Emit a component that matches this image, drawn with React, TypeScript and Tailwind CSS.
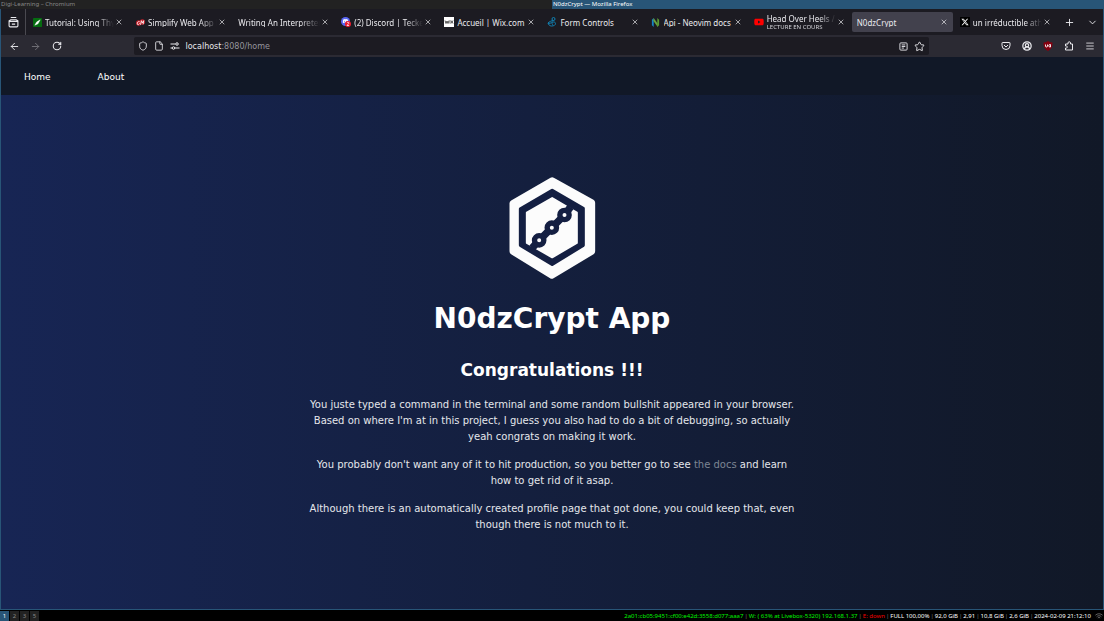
import type { ReactNode } from "react";
import {
  ArrowLeft,
  ArrowRight,
  ChevronDown,
  CircleUserRound,
  File,
  Menu,
  Plus,
  RotateCw,
  Shield,
  Star,
  X,
} from "lucide-react";
import { FaDiscord, FaXTwitter, FaYoutube } from "react-icons/fa6";

type Tab = {
  title: string;
  icon?: ReactNode;
  note?: string;
  active?: boolean;
};

const LeafIcon = () => (
  <svg viewBox="0 0 20 20" className="size-[9px]">
    <rect width="20" height="20" rx="1" fill="#056b10" />
    <path d="M16 4 8 9l-4 7 7-3z" fill="#fff" stroke="#fff" strokeWidth="1" />
  </svg>
);

const RedRingsIcon = () => (
  <svg viewBox="0 0 20 20" className="size-[9px]" fill="none">
    <circle cx="6" cy="11" r="6" fill="#c4202b" />
    <circle cx="14" cy="9" r="6" fill="#c4202b" />
    <path d="M8 8c-4-1-5 2-5 5s4 2 5-1M10 15l2-9 2 5 3-5-1 8" stroke="#fff" strokeWidth="1.8" />
  </svg>
);

const DiscordIcon = () => (
  <svg viewBox="0 0 20 20" className="size-[10px]">
    <circle cx="9" cy="9" r="9" fill="#5865f2" />
    <FaDiscord x="3" y="2" size={12} color="#fff" />
    <circle cx="14" cy="14" r="6" fill="#ed1c2e" />
    <path d="M12 12c1-2 4-1 4 0s-3 3-4 5h4" fill="none" stroke="#fff" strokeWidth="1.5" />
  </svg>
);

const WixIcon = () => (
  <svg viewBox="0 0 20 20" className="size-[10px]" fill="none">
    <rect width="20" height="20" fill="#fff" />
    <path d="m2 7 2 6 2-5 2 5 2-6M12 7v6M14 7l4 6M18 7l-4 6" stroke="#222" strokeWidth="1.5" />
  </svg>
);

const FormIcon = () => (
  <svg viewBox="0 0 20 20" className="size-[10px]" fill="none" stroke="#1182b4" strokeWidth="2">
    <circle cx="13" cy="4" r="3" />
    <path d="M13 7c-4 0-9 3-11 5 1 3 3 6 7 6 5 0 8-2 8-5s-4-4-6-2-1 4 1 4M2 12c3 2 6 0 9-3" />
  </svg>
);

const NeovimIcon = () => (
  <svg viewBox="0 0 20 20" className="size-[9px]">
    <path d="M2 4 6 0v20l-4-4z" fill="#1684c4" />
    <path d="m6 0 9 13v7L5 6z" fill="#69a33e" />
    <path d="M14 0l4 4v12l-4 4z" fill="#5a9b32" />
  </svg>
);

const XIcon = () => (
  <svg viewBox="0 0 20 20" className="size-[10px]">
    <rect width="20" height="20" rx="1" fill="#000" />
    <FaXTwitter x="2" y="2" size={16} color="#fff" />
  </svg>
);

const tabs: Tab[] = [
  { title: "Tutorial: Using Thymeleaf", icon: <LeafIcon /> },
  { title: "Simplify Web App Dev", icon: <RedRingsIcon /> },
  { title: "Writing An Interpreter In Go" },
  { title: "(2) Discord | Teckers", icon: <DiscordIcon /> },
  { title: "Accueil | Wix.com", icon: <WixIcon /> },
  { title: "Form Controls", icon: <FormIcon /> },
  { title: "Api - Neovim docs", icon: <NeovimIcon /> },
  {
    title: "Head Over Heels / Live",
    icon: <FaYoutube className="size-[10px] text-[#f00]" />,
    note: "LECTURE EN COURS",
  },
  { title: "N0dzCrypt", active: true },
  { title: "un irréductible athée", icon: <XIcon /> },
];

function TabItem({ tab }: { tab: Tab }) {
  const fade = tab.title.length > 17;
  return (
    <div className="flex min-w-0 flex-1 px-[1px] py-[3px]">
      <div
        className={
          "flex min-w-0 flex-1 items-center rounded-[2px] pr-[4px] pl-[5px] " +
          (tab.active ? "bg-[#42414d]" : "")
        }
      >
        {tab.icon && <span className="mr-[3px] flex w-[10px] shrink-0 justify-center">{tab.icon}</span>}
        <button
          className={
            "min-w-0 flex-1 overflow-hidden text-left leading-[9px] whitespace-nowrap " +
            (fade ? "[mask-image:linear-gradient(to_right,black_75%,transparent)]" : "")
          }
        >
          {tab.title}
          {tab.note && <span className="block text-[6px] leading-[8px] text-[#d5d5da]">{tab.note}</span>}
        </button>
        <button aria-label={"Close " + tab.title} className="flex w-[10px] shrink-0 justify-center">
          <X className="size-[8px]" strokeWidth={2} />
        </button>
      </div>
    </div>
  );
}

const ToolButton = ({ label, children }: { label: string; children: ReactNode }) => (
  <button aria-label={label} className="flex size-[21px] shrink-0 items-center justify-center">
    {children}
  </button>
);

function Toolbar() {
  return (
    <div className="flex h-[22px] items-center bg-[#2b2a33] pr-[3px] pl-[3px]">
      <ToolButton label="Back"><ArrowLeft className="size-[11px]" /></ToolButton>
      <ToolButton label="Forward"><ArrowRight className="size-[11px] text-[#75747b]" /></ToolButton>
      <ToolButton label="Reload"><RotateCw className="size-[10px]" strokeWidth={2.5} /></ToolButton>
      <div className="flex flex-1 justify-center">
        <div className="flex h-[18px] w-full max-w-[795px] items-center gap-[6px] rounded-[2px] bg-[#1c1b22] px-[4px]">
          <Shield className="size-[10px]" />
          <File className="size-[10px]" />
          <svg viewBox="0 0 20 20" className="size-[10px]" fill="none" stroke="currentColor" strokeWidth="2">
            <path d="M1 6h10M9 14h10M1 14h3" />
            <circle cx="14" cy="6" r="2.5" />
            <circle cx="7" cy="14" r="2.5" />
          </svg>
          <label className="relative flex h-[12px] flex-1 items-center font-['DejaVu_Sans',sans-serif] leading-[12px]">
            <input
              aria-label="Address"
              className="h-[12px] w-full bg-transparent pt-px text-transparent caret-white outline-none"
              defaultValue="localhost:8080/home"
            />
            <span aria-hidden="true" className="pointer-events-none absolute inset-x-0 top-px text-[#96969d]">
              <span className="text-[#e8e8ec]">localhost</span>:8080/home
            </span>
          </label>
          <svg viewBox="0 0 20 20" className="size-[9px]" fill="none" stroke="currentColor" strokeWidth="2">
            <rect x="2" y="2" width="16" height="16" rx="2" />
            <path d="M6 6.500h8M6 10h8M6 13.500h5" />
          </svg>
          <Star className="size-[11px]" />
        </div>
      </div>
      <div className="flex">
        <ToolButton label="Save to Pocket">
          <svg viewBox="0 0 20 20" className="size-[10px]" fill="none" stroke="currentColor" strokeWidth="2">
            <path d="M3 3h14a1 1 0 0 1 1 1v5a8 8 0 0 1-16 0V4a1 1 0 0 1 1-1z" />
            <path d="m6 8 4 4 4-4" />
          </svg>
        </ToolButton>
        <ToolButton label="Account"><CircleUserRound className="size-[10px]" strokeWidth={3} /></ToolButton>
        <ToolButton label="Content blocker">
          <svg viewBox="0 0 20 20" className="size-[10px]">
            <path d="M10 0c3 2 6 3 9 3 0 9-2 13-9 17C3 16 1 12 1 3c3 0 6-1 9-3z" fill="#850010" />
            <path d="M5 7v3a2 2 0 0 0 4 0V7M15 7h-1a2 2 0 0 0 0 5h1z" fill="none" stroke="#fff" strokeWidth="1.8" />
          </svg>
        </ToolButton>
        <ToolButton label="Extensions">
          <svg viewBox="0 0 20 20" className="size-[10px]" fill="none" stroke="currentColor" strokeWidth="2">
            <path d="M3 18V14c5 1 5-5 0-4V6h5V4a2.500 2.500 0 0 1 5 0v2h4v12z" strokeLinejoin="round" />
          </svg>
        </ToolButton>
        <ToolButton label="Menu"><Menu className="size-[10px]" /></ToolButton>
      </div>
    </div>
  );
}

const Logo = () => (
  <svg viewBox="57 35 260 306" className="h-[102px] w-[87px]" strokeLinejoin="round" aria-label="N0dzCrypt" role="img">
    <path d="M186 46 305 112V258L185 330 68 258V114z" fill="#fcfcfc" stroke="#fcfcfc" strokeWidth="20" />
    <path d="M186 75 279 129V240L186 297 91 240V131z" fill="#141f42" stroke="#141f42" strokeWidth="10" />
    <path d="M186 98 260 142V233L186 276 110 233V142z" fill="#fcfcfc" stroke="#fcfcfc" strokeWidth="6" />
    <path d="m126 248 21-23 76-76 18-24" fill="none" stroke="#141f42" strokeWidth="22" />
    <g fill="#fcfcfc" stroke="#141f42" strokeWidth="16">
      <circle cx="223" cy="149" r="14" />
      <circle cx="185" cy="187" r="14" />
      <circle cx="147" cy="225" r="14" />
    </g>
  </svg>
);

function Page() {
  return (
    <div className="flex flex-1 flex-col bg-linear-to-r from-[#172554] to-[#111827] font-['DejaVu_Sans',sans-serif] text-white">
      <nav className="flex h-[38px] items-center gap-[47px] bg-[#111827] px-[23px] pt-[3px] text-[9px]">
        <a href="#home">Home</a>
        <a href="#about">About</a>
      </nav>
      <main className="flex flex-1 flex-col items-center justify-center pt-[6px] text-center">
        <Logo />
        <h1 className="mt-[20px] text-[28px] leading-[40px] font-bold">N0dzCrypt App</h1>
        <h2 className="mt-[19px] text-[17px] leading-[24px] font-bold">Congratulations !!!</h2>
        <div className="mt-[15px] flex max-w-[490px] flex-col gap-[12px] text-[10px] leading-[16px] text-gray-200">
          <p>
            You juste typed a command in the terminal and some random bullshit appeared in your browser. Based on where
            I'm at in this project, I guess you also had to do a bit of debugging, so actually yeah congrats on making it
            work.
          </p>
          <p>
            You probably don't want any of it to hit production, so you better go to see{" "}
            <a href="#docs" className="text-[#7d8593]">the docs</a> and learn how to get rid of it asap.
          </p>
          <p>
            Although there is an automatically created profile page that got done, you could keep that, even though
            there is not much to it.
          </p>
        </div>
      </main>
    </div>
  );
}

const Separator = () => <span className="px-[1px] text-[#777]">|</span>;

const stats = ["FULL 100,00%", "92,0 GiB", "2,91", "10,8 GiB", "2,6 GiB", "2024-02-09 21:12:10"];

function StatusBar() {
  return (
    <footer className="flex h-[11px] items-center bg-black text-[6px] leading-[10px] text-white">
      <button className="flex h-[10px] w-[9px] items-center justify-center bg-[#285577]">1</button>
      {["2", "3", "5"].map((n) => (
        <button key={n} className="ml-px flex h-[10px] w-[9px] items-center justify-center bg-[#222] text-[#888]">{n}</button>
      ))}
      <div className="ml-auto flex whitespace-nowrap">
        <span className="text-[#00f000]">2a01:cb05:9451:cf00:e42d:3558:d077:aaa7</span>
        <Separator />
        <span className="text-[#00f000]">W: ( 63% at Livebox-5320) 192.168.1.37</span>
        <Separator />
        <span className="text-[#f00000]">E: down</span>
        {stats.map((s) => (
          <span key={s}><Separator />{s}</span>
        ))}
      </div>
      <svg viewBox="0 0 20 20" className="mr-px ml-[4px] size-[8px]" fill="none" stroke="#777" strokeWidth="2">
        <path d="M1 8a13 13 0 0 1 18 0M4 12a8 8 0 0 1 12 0M7 15a4 4 0 0 1 6 0" />
      </svg>
    </footer>
  );
}

export default function App() {
  return (
    <div className="flex min-h-screen flex-col bg-black font-['Noto_Sans',sans-serif] text-[8px] text-[#ebebef]">
      <header className="grid h-[9px] grid-cols-2 text-[6px] leading-[9px]">
        <div className="bg-[#222] px-px text-[#888]">Digi-Learning – Chromium</div>
        <div className="bg-[#285577] px-px text-white">N0dzCrypt — Mozilla Firefox</div>
      </header>
      <div className="flex flex-1 flex-col border-x border-b border-[#285577]">
        <div className="flex h-[26px] bg-[#1c1b22]">
          <div className="flex w-[25px] shrink-0 items-center justify-center border-r border-[#4a4950]">
            <button aria-label="Recent browsing">
              <svg viewBox="0 0 20 20" className="size-[11px]" fill="none" stroke="currentColor" strokeWidth="2">
                <path d="M5 1h10M2 8V7l3-2h10l3 2v1M2 8h16v8a2 2 0 0 1-2 2H4a2 2 0 0 1-2-2zM7 13h6" />
              </svg>
            </button>
          </div>
          <div className="flex min-w-0 flex-1">
            {tabs.map((tab) => <TabItem key={tab.title} tab={tab} />)}
          </div>
          <div className="flex items-center gap-[2px] pl-[2px]">
            <ToolButton label="New tab"><Plus className="size-[11px]" /></ToolButton>
            <ToolButton label="List all tabs"><ChevronDown className="size-[11px]" /></ToolButton>
          </div>
        </div>
        <Toolbar />
        <Page />
      </div>
      <StatusBar />
    </div>
  );
}
